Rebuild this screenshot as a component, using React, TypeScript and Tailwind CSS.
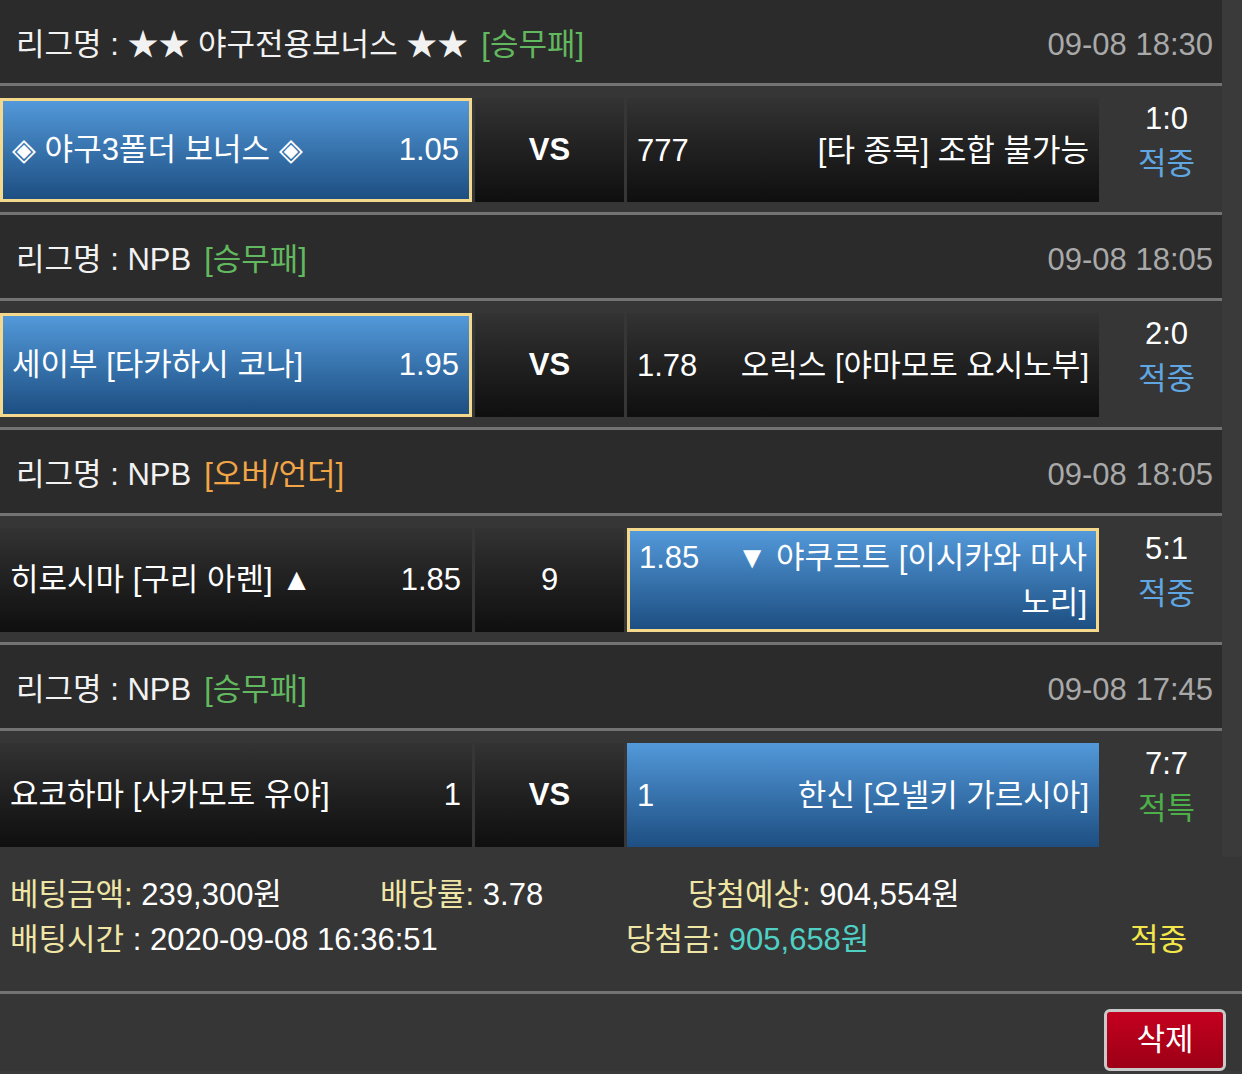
import React from "react";

type Side = "sel" | "blue" | "dark";

interface Match {
  league: string;
  kind: string;
  kindColor: string;
  time: string;
  home: { name: string; odds: string; side: Side };
  mid: { text: string; bold?: boolean };
  away: { name: string; odds: string; side: Side };
  score: string;
  result: string;
  resultColor: string;
}

const matches: Match[] = [
  {
    league: "★★ 야구전용보너스 ★★",
    kind: "[승무패]",
    kindColor: "text-[#62b85e]",
    time: "09-08 18:30",
    home: { name: "◈ 야구3폴더 보너스 ◈", odds: "1.05", side: "sel" },
    mid: { text: "VS", bold: true },
    away: { name: "[타 종목] 조합 불가능", odds: "777", side: "dark" },
    score: "1:0",
    result: "적중",
    resultColor: "text-[#5fa6e2]",
  },
  {
    league: "NPB",
    kind: "[승무패]",
    kindColor: "text-[#62b85e]",
    time: "09-08 18:05",
    home: { name: "세이부 [타카하시 코나]", odds: "1.95", side: "sel" },
    mid: { text: "VS", bold: true },
    away: { name: "오릭스 [야마모토 요시노부]", odds: "1.78", side: "dark" },
    score: "2:0",
    result: "적중",
    resultColor: "text-[#5fa6e2]",
  },
  {
    league: "NPB",
    kind: "[오버/언더]",
    kindColor: "text-[#f2a546]",
    time: "09-08 18:05",
    home: { name: "히로시마 [구리 아렌] ▲", odds: "1.85", side: "dark" },
    mid: { text: "9" },
    away: { name: "▼ 야쿠르트 [이시카와 마사노리]", odds: "1.85", side: "sel" },
    score: "5:1",
    result: "적중",
    resultColor: "text-[#5fa6e2]",
  },
  {
    league: "NPB",
    kind: "[승무패]",
    kindColor: "text-[#62b85e]",
    time: "09-08 17:45",
    home: { name: "요코하마 [사카모토 유야]", odds: "1", side: "dark" },
    mid: { text: "VS", bold: true },
    away: { name: "한신 [오넬키 가르시아]", odds: "1", side: "blue" },
    score: "7:7",
    result: "적특",
    resultColor: "text-[#4caf4a]",
  },
];

const cellStyle: Record<Side, string> = {
  sel: "bg-linear-to-b from-[#5399da] to-[#1d4f82] border-[3px] border-[#f4d98c] px-[9px]",
  blue: "bg-linear-to-b from-[#5399da] to-[#1d4f82] px-[10px]",
  dark: "bg-linear-to-b from-[#333333] to-[#0f0f0f] px-[10px]",
};

const Separator = ({ full }: { full?: boolean }) => (
  <div className={full ? "h-[3px] w-full bg-[#737373]" : "h-[3px] w-[1222px] bg-[#737373]"} />
);

const Header = ({ m }: { m: Match }) => (
  <div className="flex h-[83px] w-[1222px] items-center justify-between bg-[#2b2b2b] pl-4 pr-[9px] pt-[8px]">
    <div className="flex items-center text-[#f2f2f2]">
      <span>리그명 : {m.league}</span>
      <span className={`ml-[13px] ${m.kindColor}`}>{m.kind}</span>
    </div>
    <span className="text-[#a9a9a9]">{m.time}</span>
  </div>
);

const MatchRow = ({ m }: { m: Match }) => (
  <div className="flex w-[1222px] bg-[#363636] pb-[10px] pt-[12px]">
    <div className={`flex h-[104px] w-[472px] items-center text-white ${cellStyle[m.home.side]}`}>
      <div className="flex w-full items-start justify-between gap-6">
        <span>{m.home.name}</span>
        <span className="shrink-0 pr-[1px]">{m.home.odds}</span>
      </div>
    </div>
    <div className="ml-[3px] flex h-[104px] w-[149px] items-center justify-center bg-linear-to-b from-[#333333] to-[#0f0f0f] text-white">
      <span className={m.mid.bold ? "font-bold" : ""}>{m.mid.text}</span>
    </div>
    <div className={`ml-[3px] flex h-[104px] w-[472px] items-center text-white ${cellStyle[m.away.side]}`}>
      <div className="flex w-full items-start justify-between gap-8 leading-[45px]">
        <span className="shrink-0">{m.away.odds}</span>
        <span className="text-right">{m.away.name}</span>
      </div>
    </div>
    <div className="flex w-[123px] flex-col items-center pl-3 leading-[45px]">
      <span className="-mt-[2px] text-white">{m.score}</span>
      <span className={m.resultColor}>{m.result}</span>
    </div>
  </div>
);

export default function App() {
  return (
    <div
      className="min-h-screen w-[1242px] bg-[#3a3a3a] text-[31px]"
      style={{ fontFamily: "'Liberation Sans', 'Noto Sans CJK KR', sans-serif" }}
    >
      {matches.map((m, i) => (
        <div key={i}>
          <Header m={m} />
          <Separator />
          <MatchRow m={m} />
          {i < matches.length - 1 && <Separator />}
        </div>
      ))}

      <div className="bg-[#363636] pb-[29px] pt-[15px] leading-[45px]">
        <div className="flex pl-[10px]">
          <span className="w-[370px]">
            <span className="text-[#efe6a6]">베팅금액:</span>
            <span className="text-white"> 239,300원</span>
          </span>
          <span className="w-[308px]">
            <span className="text-[#efe6a6]">배당률:</span>
            <span className="text-white"> 3.78</span>
          </span>
          <span>
            <span className="text-[#efe6a6]">당첨예상:</span>
            <span className="text-white"> 904,554원</span>
          </span>
        </div>
        <div className="flex pl-[10px]">
          <span className="w-[616px]">
            <span className="text-[#efe6a6]">배팅시간 </span>
            <span className="text-white">: 2020-09-08 16:36:51</span>
          </span>
          <span className="w-[504px]">
            <span className="text-[#efe6a6]">당첨금:</span>
            <span className="text-[#4fd0c4]"> 905,658원</span>
          </span>
          <span className="text-[#f2e64a]">적중</span>
        </div>
      </div>
      <Separator full />
      <div className="flex justify-end bg-[#363636] pr-4 pt-[15px]">
        <button className="flex h-[62px] w-[122px] items-center justify-center rounded-md border-[3px] border-[#c9c9c9] bg-linear-to-b from-[#c4001f] to-[#9c0016] text-white">
          삭제
        </button>
      </div>
    </div>
  );
}
